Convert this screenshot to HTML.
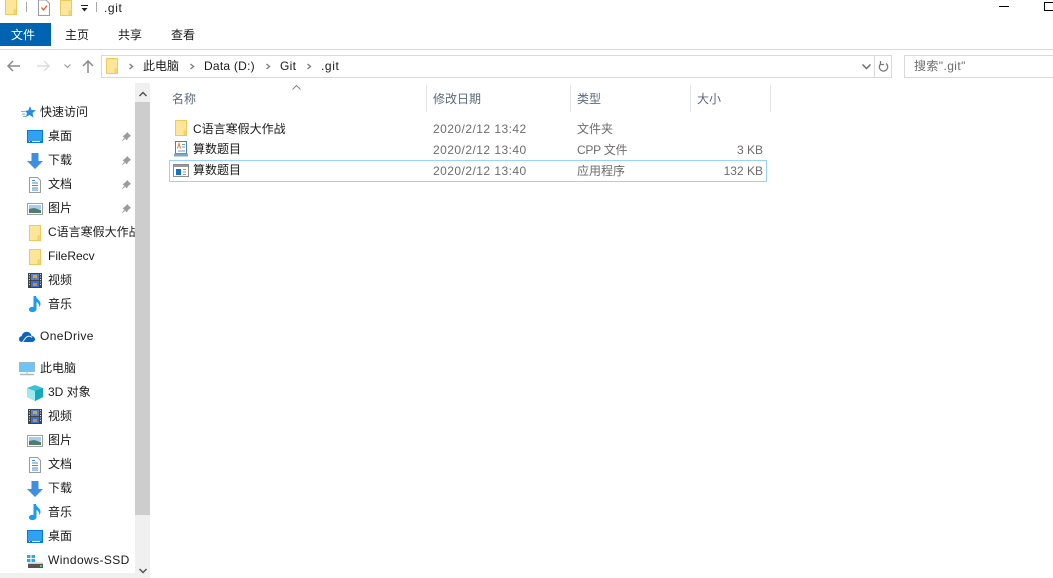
<!DOCTYPE html>
<html lang="zh">
<head>
<meta charset="utf-8">
<title>.git</title>
<style>
html,body{margin:0;padding:0;background:#fff}
body{width:1053px;height:578px;position:relative;overflow:hidden;font:12px/16px "Liberation Sans","Noto Sans CJK SC",sans-serif;color:#1a1a1a}
.t{position:absolute;white-space:nowrap;line-height:16px}
.r{position:absolute}
.g{color:#6d6d6d}
.d{letter-spacing:.46px}
svg.i{position:absolute;overflow:visible}
</style>
</head>
<body>
<svg width="0" height="0" style="position:absolute">
<defs>
<symbol id="folder" viewBox="0 0 12 16"><path d="M.5.5H11.500V15.500H.5Z" fill="#fde59a" stroke="#eec95c"/><path d="M9 15V11H11.500V15Z" fill="#f8d775" stroke="#eec95c" stroke-width=".7"/></symbol>
<symbol id="desk" viewBox="0 0 16 13"><rect width="16" height="13" fill="#0b78d0"/><rect x="1" y="1" width="14" height="10" fill="#2fa2f5"/><path d="M2 11.500h1M5 11.500h8" stroke="#fff"/></symbol>
<symbol id="down" viewBox="0 0 16 16"><path d="M4.500 0H11.500V8H16L8 16 0 8H4.500Z" fill="#3e8fe0"/></symbol>
<symbol id="doc" viewBox="0 0 12 16"><path d="M.5.5H8.500L11.500 3.500V15.500H.5Z" fill="#fff" stroke="#9b9b9b"/><path d="M3 3.500h3M3 6h6M3 8.500h6M3 11h6M3 13h6" stroke="#3f8fd0"/></symbol>
<symbol id="pic" viewBox="0 0 16 12"><rect x=".5" y=".5" width="15" height="11" fill="#fff" stroke="#a0a0a0"/><rect x="2" y="2" width="12" height="4" fill="#a9cdee"/><path d="M2 6L7 5 14 7V10H2Z" fill="#4f7f6c"/></symbol>
<symbol id="video" viewBox="0 0 14 15"><rect width="14" height="15" fill="#3e4348"/><rect x="3" y="1" width="8" height="6" fill="#5c7fc0"/><rect x="3" y="8" width="8" height="6" fill="#3a6fd0"/><rect x="5" y="2" width="4" height="3" fill="#d2a83a"/><rect x="5" y="10" width="4" height="3" fill="#d08a3a"/><path d="M1 1.500h1M1 4h1M1 6.500h1M1 9h1M1 11.500h1M12 1.500h1M12 4h1M12 6.500h1M12 9h1M12 11.500h1" stroke="#ddd"/></symbol>
<symbol id="music" viewBox="0 0 12 16"><path d="M4.500 0H7C7 3 11.500 4 11.500 8 11.500 9 11 10 10.500 11.500 10.500 8.500 9 6.500 7.500 6V13C7.500 15 5.500 16 3.500 16 1 16 0 15 0 13.500 0 11.500 2 10.500 4.500 11Z" fill="#1b9cec"/></symbol>
<symbol id="pin" viewBox="0 0 10 10"><path d="M6 0L10 4 8.500 4.800 6.500 7 6 8.500 1.500 4 3 3.500 5.200 1.500ZM3 6L.5 9.500 4 7Z" fill="#9a9a9a"/></symbol>
</defs>
</svg>

<!-- title bar -->
<svg class="i" style="left:5px;top:0" width="12" height="15"><use href="#folder" width="12" height="16" y="-1"/></svg>
<div class="r" style="left:26px;top:2px;width:1px;height:10px;background:#a8a8a8"></div>
<svg class="i" style="left:38px;top:0" width="12" height="16"><path d="M.5 0H8L11.500 3.500V15.500H.5Z" fill="#fff" stroke="#9c9c9c"/><path d="M3.500 7.500L5.500 10 9 5.500" fill="none" stroke="#e4582a" stroke-width="1.300"/></svg>
<svg class="i" style="left:60px;top:0" width="12" height="16"><use href="#folder" width="12" height="16"/></svg>
<svg class="i" style="left:81px;top:5px" width="7" height="7"><path d="M0 .5H7" stroke="#222"/><path d="M.5 3H6.500L3.500 6.500Z" fill="#222"/></svg>
<div class="r" style="left:96px;top:2px;width:1px;height:10px;background:#a8a8a8"></div>
<div class="t" style="left:104px;top:0;letter-spacing:.6px">.git</div>
<div class="r" style="left:999px;top:6px;width:10px;height:1px;background:#000"></div>
<div class="r" style="left:1044px;top:2px;width:10px;height:9px;border:1px solid #000;box-sizing:border-box"></div>

<!-- ribbon tabs -->
<div class="r" style="left:0;top:23px;width:51px;height:23px;background:#0063b1"></div>
<div class="t" style="left:11px;top:27px;color:#fff">文件</div>
<div class="t" style="left:65px;top:27px">主页</div>
<div class="t" style="left:118px;top:27px">共享</div>
<div class="t" style="left:171px;top:27px">查看</div>
<div class="r" style="left:0;top:49px;width:1053px;height:1px;background:#dadada"></div>

<!-- nav buttons -->
<svg class="i" style="left:7px;top:60px" width="13" height="12"><path d="M6 1L1 6 6 11M1 6H13" fill="none" stroke="#8a8a8a" stroke-width="1.500"/></svg>
<svg class="i" style="left:37px;top:60px" width="13" height="12"><path d="M7 1L12 6 7 11M0 6H12" fill="none" stroke="#dcdcdc" stroke-width="1.500"/></svg>
<svg class="i" style="left:64px;top:64px" width="7" height="5"><path d="M.5 .5L3.500 3.500 6.500 .5" fill="none" stroke="#9a9a9a" stroke-width="1.200"/></svg>
<svg class="i" style="left:82px;top:60px" width="12" height="13"><path d="M1 6L6 1 11 6M6 1V13" fill="none" stroke="#8a8a8a" stroke-width="1.500"/></svg>

<!-- address -->
<div class="r" style="left:101px;top:55px;width:791px;height:23px;border:1px solid #d9d9d9;box-sizing:border-box"></div>
<div class="r" style="left:874px;top:56px;width:1px;height:21px;background:#d9d9d9"></div>
<svg class="i" style="left:106px;top:58px" width="12" height="16"><use href="#folder" width="12" height="16"/></svg>
<svg class="i" style="left:129px;top:63px" width="5" height="7"><path d="M.5 1L3.500 3.500 .5 6" fill="none" stroke="#808080" stroke-width="1.400"/></svg>
<div class="t" style="left:143px;top:58px">此电脑</div>
<svg class="i" style="left:190px;top:63px" width="5" height="7"><path d="M.5 1L3.500 3.500 .5 6" fill="none" stroke="#808080" stroke-width="1.400"/></svg>
<div class="t" style="left:204px;top:58px;letter-spacing:.25px">Data (D:)</div>
<svg class="i" style="left:266px;top:63px" width="5" height="7"><path d="M.5 1L3.500 3.500 .5 6" fill="none" stroke="#808080" stroke-width="1.400"/></svg>
<div class="t" style="left:280px;top:58px;letter-spacing:.3px">Git</div>
<svg class="i" style="left:307px;top:63px" width="5" height="7"><path d="M.5 1L3.500 3.500 .5 6" fill="none" stroke="#808080" stroke-width="1.400"/></svg>
<div class="t" style="left:321px;top:58px;letter-spacing:.6px">.git</div>
<svg class="i" style="left:862px;top:64px" width="9" height="6"><path d="M.5 .5L4.500 4.500 8.500 .5" fill="none" stroke="#666" stroke-width="1.400"/></svg>
<svg class="i" style="left:878px;top:60px" width="11" height="13"><path d="M2.500 4A4.200 4.200 0 1 0 8 3.500M2.500 1V4.500H6" fill="none" stroke="#777" stroke-width="1.300"/></svg>
<div class="r" style="left:904px;top:55px;width:150px;height:23px;border:1px solid #d9d9d9;box-sizing:border-box"></div>
<div class="t" style="left:914px;top:58px;color:#6d6d6d;letter-spacing:.4px">搜索".git"</div>

<!-- sidebar scrollbar -->
<div class="r" style="left:135px;top:83px;width:15px;height:495px;background:#f0f0f0"></div>
<div class="r" style="left:135px;top:102px;width:15px;height:413px;background:#cdcdcd"></div>
<svg class="i" style="left:139px;top:91px" width="8" height="6"><path d="M.5 5L4 1.500 7.500 5" fill="none" stroke="#555" stroke-width="1.500"/></svg>
<svg class="i" style="left:139px;top:568px" width="8" height="6"><path d="M.5 1L4 4.500 7.500 1" fill="none" stroke="#555" stroke-width="1.500"/></svg>
<div class="r" style="left:0;top:573px;width:135px;height:5px;background:#f0f0f0"></div>

<!-- sidebar tree -->
<svg class="i" style="left:21px;top:106px" width="15" height="13"><path d="M9 0L10.500 4 15 4.300 11.500 7 12.500 11.500 8.500 9 5 11 6 7 4 5 7.500 4.300Z" fill="#2a8ae0"/><path d="M0 5.500H4M1 8H4.500M2 10.500H5" stroke="#6ab6ef"/></svg>
<div class="t" style="left:40px;top:104px">快速访问</div>

<svg class="i" style="left:27px;top:130px" width="16" height="13"><use href="#desk" width="16" height="13"/></svg>
<div class="t" style="left:48px;top:128px">桌面</div>
<svg class="i" style="left:121px;top:132px" width="10" height="10"><use href="#pin" width="10" height="10"/></svg>

<svg class="i" style="left:27px;top:153px" width="16" height="16"><use href="#down" width="16" height="16"/></svg>
<div class="t" style="left:48px;top:152px">下载</div>
<svg class="i" style="left:121px;top:156px" width="10" height="10"><use href="#pin" width="10" height="10"/></svg>

<svg class="i" style="left:29px;top:177px" width="12" height="16"><use href="#doc" width="12" height="16"/></svg>
<div class="t" style="left:48px;top:176px">文档</div>
<svg class="i" style="left:121px;top:180px" width="10" height="10"><use href="#pin" width="10" height="10"/></svg>

<svg class="i" style="left:27px;top:203px" width="16" height="12"><use href="#pic" width="16" height="12"/></svg>
<div class="t" style="left:48px;top:200px">图片</div>
<svg class="i" style="left:121px;top:204px" width="10" height="10"><use href="#pin" width="10" height="10"/></svg>

<svg class="i" style="left:29px;top:225px" width="12" height="16"><use href="#folder" width="12" height="16"/></svg>
<div class="t" style="left:48px;top:224px;width:87px;overflow:hidden">C语言寒假大作战</div>

<svg class="i" style="left:29px;top:249px" width="12" height="16"><use href="#folder" width="12" height="16"/></svg>
<div class="t" style="left:48px;top:248px">FileRecv</div>

<svg class="i" style="left:28px;top:273px" width="14" height="15"><use href="#video" width="14" height="15"/></svg>
<div class="t" style="left:48px;top:272px">视频</div>

<svg class="i" style="left:29px;top:296px" width="12" height="16"><use href="#music" width="12" height="16"/></svg>
<div class="t" style="left:48px;top:296px">音乐</div>

<svg class="i" style="left:19px;top:331px" width="16" height="11"><path d="M3 11C1 11 0 9.500 0 8 0 6.500 1 5.500 2.500 5.300 3.500 2 6 0 9 1 11 1.500 12.500 3.500 12.500 5 14.500 5 16 6.500 16 8.300 16 10 14.500 11 13 11Z" fill="#0a64c0"/><path d="M3.500 11L7 6.500C9 4.500 12 5 13 6.500" fill="none" stroke="#fff"/></svg>
<div class="t" style="left:40px;top:328px;letter-spacing:.4px">OneDrive</div>

<svg class="i" style="left:19px;top:362px" width="16" height="14"><rect x=".5" y=".5" width="15" height="9" fill="#6cc5f5" stroke="#9fb8c8"/><path d="M1 12.500H15" stroke="#a8bcc8" stroke-width="1.500"/><path d="M8 10V13" stroke="#a8bcc8"/></svg>
<div class="t" style="left:40px;top:360px">此电脑</div>

<svg class="i" style="left:27px;top:385px" width="16" height="16"><path d="M8 0L16 3V12L8 16 0 12V3Z" fill="#3cc3cf"/><path d="M0 3L8 6V16L0 12Z" fill="#9ceaf0"/><path d="M8 6L16 3V12L8 16Z" fill="#17a7bb"/></svg>
<div class="t" style="left:48px;top:384px">3D 对象</div>

<svg class="i" style="left:28px;top:409px" width="14" height="15"><use href="#video" width="14" height="15"/></svg>
<div class="t" style="left:48px;top:408px">视频</div>

<svg class="i" style="left:27px;top:435px" width="16" height="12"><use href="#pic" width="16" height="12"/></svg>
<div class="t" style="left:48px;top:432px">图片</div>

<svg class="i" style="left:29px;top:457px" width="12" height="16"><use href="#doc" width="12" height="16"/></svg>
<div class="t" style="left:48px;top:456px">文档</div>

<svg class="i" style="left:27px;top:481px" width="16" height="16"><use href="#down" width="16" height="16"/></svg>
<div class="t" style="left:48px;top:480px">下载</div>

<svg class="i" style="left:29px;top:504px" width="12" height="16"><use href="#music" width="12" height="16"/></svg>
<div class="t" style="left:48px;top:504px">音乐</div>

<svg class="i" style="left:27px;top:530px" width="16" height="13"><use href="#desk" width="16" height="13"/></svg>
<div class="t" style="left:48px;top:528px">桌面</div>

<svg class="i" style="left:27px;top:555px" width="16" height="14"><rect x="0" y="0" width="3.500" height="3" fill="#19b0f0"/><rect x="4.500" y="0" width="3.500" height="3" fill="#19b0f0"/><rect x="0" y="4" width="3.500" height="3" fill="#19b0f0"/><rect x="4.500" y="4" width="3.500" height="3" fill="#19b0f0"/><rect x="1" y="9" width="15" height="4" fill="#555"/><rect x="1" y="7.500" width="15" height="1.500" fill="#ccc"/><rect x="13" y="10" width="2" height="2" fill="#4ce04c"/></svg>
<div class="t" style="left:48px;top:552px;letter-spacing:.4px">Windows-SSD</div>

<!-- columns -->
<svg class="i" style="left:292px;top:85px" width="9" height="5"><path d="M.5 4.500L4.500 .5 8.500 4.500" fill="none" stroke="#888"/></svg>
<div class="r" style="left:426px;top:85px;width:1px;height:27px;background:#e5e5e5"></div>
<div class="r" style="left:570px;top:85px;width:1px;height:27px;background:#e5e5e5"></div>
<div class="r" style="left:690px;top:85px;width:1px;height:27px;background:#e5e5e5"></div>
<div class="r" style="left:770px;top:85px;width:1px;height:27px;background:#e5e5e5"></div>
<div class="t" style="left:172px;top:91px;color:#5b6a7a">名称</div>
<div class="t" style="left:433px;top:91px;color:#5b6a7a">修改日期</div>
<div class="t" style="left:577px;top:91px;color:#5b6a7a">类型</div>
<div class="t" style="left:697px;top:91px;color:#5b6a7a">大小</div>

<!-- rows -->
<div class="r" style="left:169px;top:160px;width:598px;height:22px;border:1px solid #99d1ff;box-sizing:border-box"></div>

<svg class="i" style="left:175px;top:120px" width="12" height="16"><use href="#folder" width="12" height="16"/></svg>
<div class="t" style="left:193px;top:121px">C语言寒假大作战</div>
<div class="t g d" style="left:433px;top:121px">2020/2/12 13:42</div>
<div class="t g" style="left:577px;top:121px">文件夹</div>

<svg class="i" style="left:174px;top:141px" width="14" height="16"><path d="M1.500 .5H12.500V12.500H1.500Z" fill="#fff" stroke="#4a7fb5"/><path d="M0 12.500H14V15.500H0Z" fill="#7fa6cc"/><path d="M3.500 7.500L5 2.500 6.500 7.500" fill="none" stroke="#e8792a"/><path d="M8 3.500h3M8 6h3M4 10h7" stroke="#6b9ac8"/></svg>
<div class="t" style="left:193px;top:141px">算数题目</div>
<div class="t g d" style="left:433px;top:142px">2020/2/12 13:40</div>
<div class="t g" style="left:577px;top:142px;letter-spacing:-.25px">CPP 文件</div>
<div class="t g" style="right:290px;top:142px">3 KB</div>

<svg class="i" style="left:173px;top:164px" width="16" height="13"><rect x=".5" y=".5" width="15" height="12" fill="#fff" stroke="#8a8a8a"/><rect x="1" y="1" width="14" height="2" fill="#9a9a9a"/><rect x="3" y="5" width="5" height="6" fill="#1470c8"/><path d="M10 5.500h3M10 8h3M10 10.500h3" stroke="#9a9a9a"/></svg>
<div class="t" style="left:193px;top:162px">算数题目</div>
<div class="t g d" style="left:433px;top:163px">2020/2/12 13:40</div>
<div class="t g" style="left:577px;top:163px">应用程序</div>
<div class="t g" style="right:290px;top:163px">132 KB</div>
</body>
</html>
